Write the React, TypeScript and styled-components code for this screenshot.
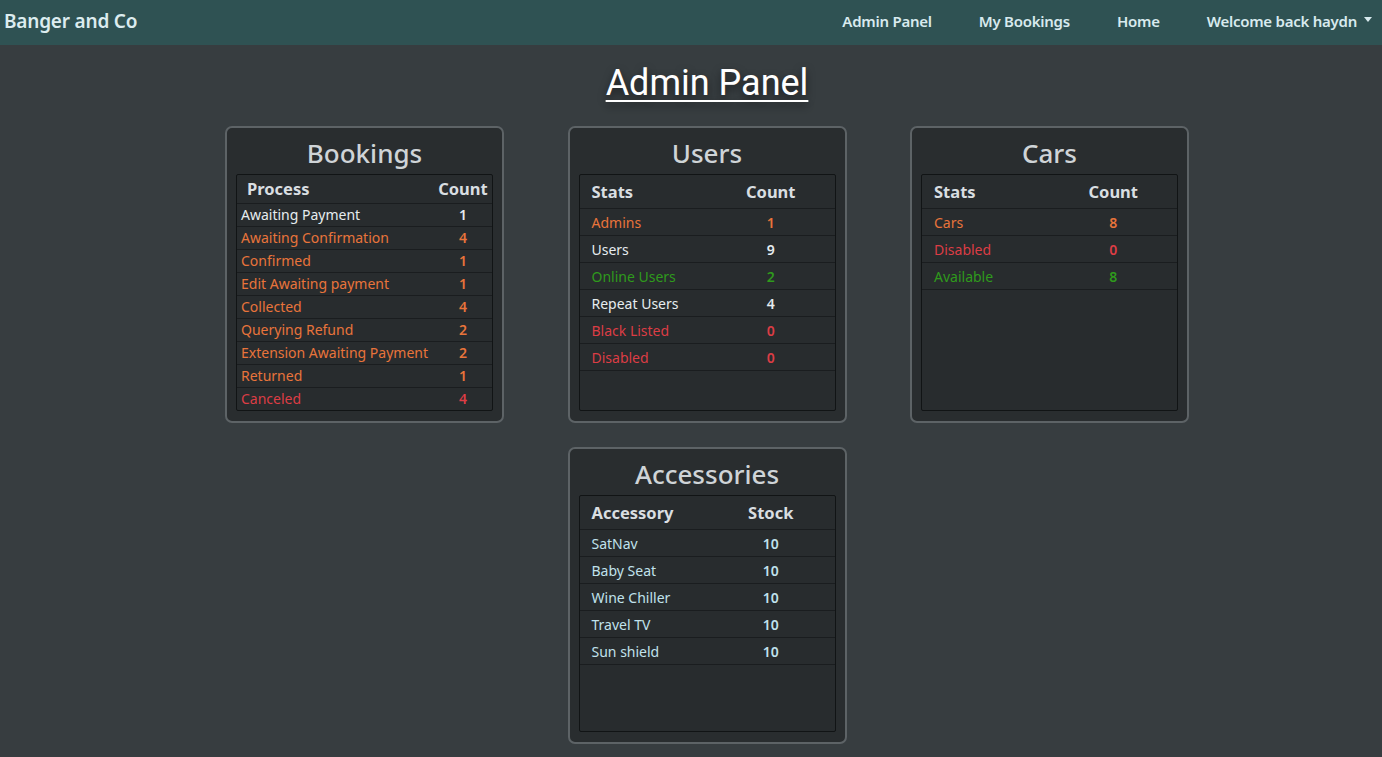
import React from "react";
import styled, { createGlobalStyle } from "styled-components";

const Global = createGlobalStyle`
  html, body { margin: 0; padding: 0; background: #373d40; }
  body { font-family: "Noto Sans", "Open Sans", sans-serif; color: #dde3e6; }
  * { box-sizing: border-box; }
`;

const Nav = styled.nav`
  height: 45px;
  background: #2f5253;
  display: flex;
  align-items: center;
  justify-content: space-between;
  padding: 0 10px 3px 4px;
`;

const Brand = styled.div`
  font-size: 19px;
  font-weight: 600;
  color: #dcecef;
  letter-spacing: -0.2px;
`;

const Links = styled.div`
  display: flex;
  align-items: center;
`;

const NavLink = styled.a`
  font-size: 15px;
  font-weight: 600;
  color: #d8eaee;
  padding: 0 23.5px;
  letter-spacing: -0.25px;
  display: flex;
  align-items: center;
  gap: 7px;
  &:last-child { padding-right: 0; }
`;

const Caret = styled.span`
  width: 0;
  height: 0;
  border-left: 4.5px solid transparent;
  border-right: 4.5px solid transparent;
  border-top: 5px solid #d8eaee;
  margin-top: -4px;
`;

const Main = styled.main`
  padding-left: 32px;
  display: flex;
  flex-direction: column;
  align-items: center;
`;

const Title = styled.h1`
  font-family: Roboto, "Noto Sans", sans-serif;
  font-weight: 400;
  font-size: 36px;
  color: #ffffff;
  text-decoration: underline;
  text-decoration-thickness: 2px;
  text-underline-offset: 5px;
  text-shadow: 0 4px 8px rgba(0, 0, 0, 0.55);
  margin: 16px 0 21px;
  line-height: 44px;
`;

const Grid = styled.div`
  display: grid;
  grid-template-columns: 279px 279px 279px;
  column-gap: 63.5px;
  row-gap: 24px;
`;

const Card = styled.section<{ $col?: number }>`
  width: 279px;
  height: 297px;
  border: 2px solid #5d6366;
  border-radius: 7px;
  background: #292d2f;
  padding: 0 9px 10px;
  display: flex;
  flex-direction: column;
  ${(p) => (p.$col ? `grid-column: ${p.$col};` : "")}
`;

const CardTitle = styled.h2`
  margin: 7px 0 3px;
  height: 36px;
  line-height: 36px;
  font-size: 26px;
  font-weight: 500;
  text-align: center;
  color: #cfd4d7;
`;

const TableBox = styled.div`
  flex: 1;
  border: 1px solid #111415;
  border-radius: 2px;
  background: #282c2e;
  overflow: hidden;
`;

const Table = styled.table`
  width: 100%;
  border-collapse: collapse;
`;

const Th = styled.th<{ $compact?: boolean; $center?: boolean; $w?: string }>`
  font-size: 16.5px;
  font-weight: 700;
  color: #d9dee1;
  text-align: ${(p) => (p.$center ? "center" : "left")};
  height: ${(p) => (p.$compact ? "28px" : "33px")};
  padding: 0 ${(p) => (p.$compact ? (p.$center ? "4px" : "10px") : "12px")};
  border-bottom: 1px solid #1a1d1f;
  ${(p) => (p.$w ? `width: ${p.$w};` : "")}
  white-space: nowrap;
`;

const tone: Record<string, string> = {
  white: "#e6ecef",
  orange: "#e8743b",
  red: "#dc3d45",
  green: "#2f9a1c",
  blue: "#c0e2ec",
};

const Td = styled.td<{ $compact?: boolean; $center?: boolean; $tone: string }>`
  font-size: 14px;
  font-weight: ${(p) => (p.$center ? 600 : 400)};
  color: ${(p) => tone[p.$tone]};
  text-align: ${(p) => (p.$center ? "center" : "left")};
  height: ${(p) => (p.$compact ? "23px" : "27px")};
  padding: ${(p) => (p.$compact ? "0 4px" : "2px 12px 0")};
  border-bottom: 1px solid #1a1d1f;
  white-space: nowrap;
`;

type Row = [string, string | number, string];

const bookings: Row[] = [
  ["Awaiting Payment", 1, "white"],
  ["Awaiting Confirmation", 4, "orange"],
  ["Confirmed", 1, "orange"],
  ["Edit Awaiting payment", 1, "orange"],
  ["Collected", 4, "orange"],
  ["Querying Refund", 2, "orange"],
  ["Extension Awaiting Payment", 2, "orange"],
  ["Returned", 1, "orange"],
  ["Canceled", 4, "red"],
];

const users: Row[] = [
  ["Admins", 1, "orange"],
  ["Users", 9, "white"],
  ["Online Users", 2, "green"],
  ["Repeat Users", 4, "white"],
  ["Black Listed", 0, "red"],
  ["Disabled", 0, "red"],
];

const cars: Row[] = [
  ["Cars", 8, "orange"],
  ["Disabled", 0, "red"],
  ["Available", 8, "green"],
];

const accessories: Row[] = [
  ["SatNav", 10, "blue"],
  ["Baby Seat", 10, "blue"],
  ["Wine Chiller", 10, "blue"],
  ["Travel TV", 10, "blue"],
  ["Sun shield", 10, "blue"],
];

function StatCard({
  title,
  head,
  rows,
  compact,
  col,
}: {
  title: string;
  head: [string, string];
  rows: Row[];
  compact?: boolean;
  col?: number;
}) {
  return (
    <Card $col={col}>
      <CardTitle>{title}</CardTitle>
      <TableBox>
        <Table>
          <thead>
            <tr>
              <Th $compact={compact} $w={compact ? undefined : "50%"}>{head[0]}</Th>
              <Th $compact={compact} $center>{head[1]}</Th>
            </tr>
          </thead>
          <tbody>
            {rows.map(([name, val, t]) => (
              <tr key={name}>
                <Td $compact={compact} $tone={t}>{name}</Td>
                <Td $compact={compact} $tone={t} $center>{val}</Td>
              </tr>
            ))}
          </tbody>
        </Table>
      </TableBox>
    </Card>
  );
}

export default function App() {
  return (
    <>
      <Global />
      <Nav>
        <Brand>Banger and Co</Brand>
        <Links>
          <NavLink>Admin Panel</NavLink>
          <NavLink>My Bookings</NavLink>
          <NavLink>Home</NavLink>
          <NavLink>
            Welcome back haydn <Caret />
          </NavLink>
        </Links>
      </Nav>
      <Main>
        <Title>Admin Panel</Title>
        <Grid>
          <StatCard title="Bookings" head={["Process", "Count"]} rows={bookings} compact />
          <StatCard title="Users" head={["Stats", "Count"]} rows={users} />
          <StatCard title="Cars" head={["Stats", "Count"]} rows={cars} />
          <StatCard title="Accessories" head={["Accessory", "Stock"]} rows={accessories} col={2} />
        </Grid>
      </Main>
    </>
  );
}
